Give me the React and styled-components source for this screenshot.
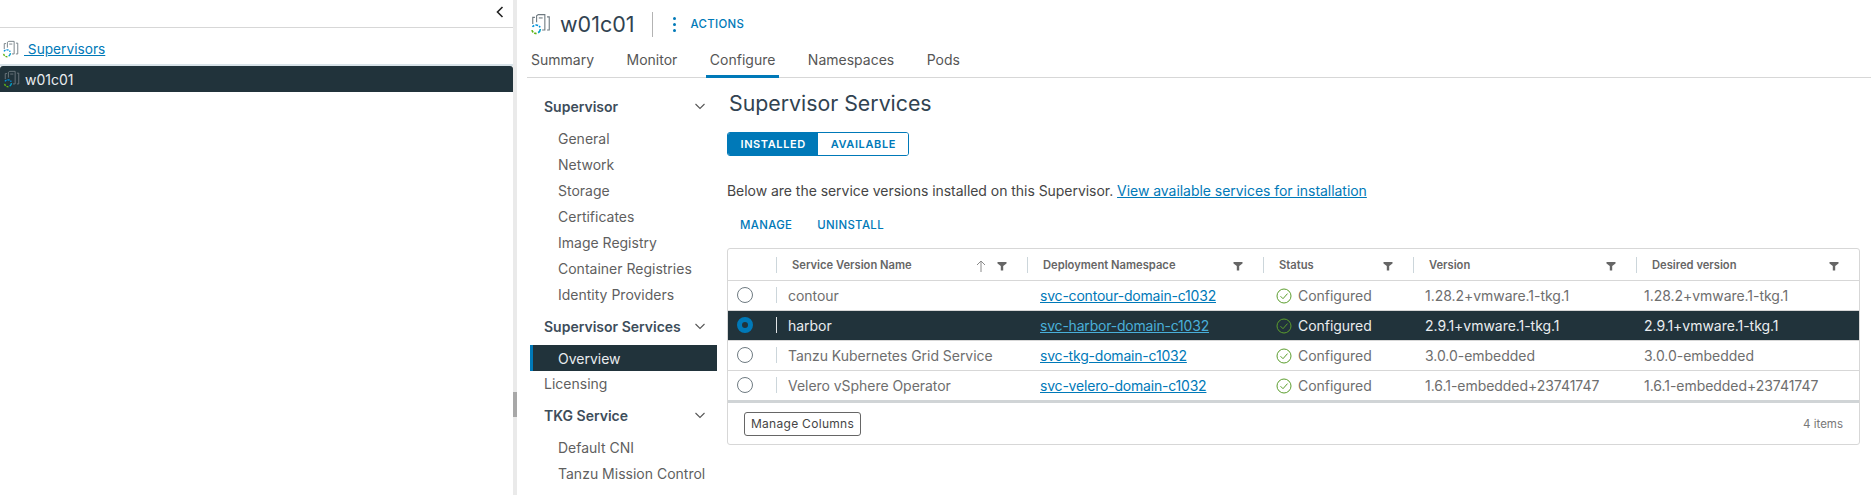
import React from "react";
import styled, { createGlobalStyle } from "styled-components";

const services = [
  { name: "contour", ns: "svc-contour-domain-c1032", version: "1.28.2+vmware.1-tkg.1" },
  { name: "harbor", ns: "svc-harbor-domain-c1032", version: "2.9.1+vmware.1-tkg.1", selected: true },
  { name: "Tanzu Kubernetes Grid Service", ns: "svc-tkg-domain-c1032", version: "3.0.0-embedded" },
  { name: "Velero vSphere Operator", ns: "svc-velero-domain-c1032", version: "1.6.1-embedded+23741747" },
];

const columns = "48px 251px 236px 150px 223px 1fr";

function ClusterIcon({ size = 19 }) {
  return (
    <svg width={size} height={size} viewBox="0 0 20 20" fill="none">
      <path d="M2.5 10V4H4.5" stroke="#6f7a81" />
      <path d="M6 8.5V2.5L7.5 1.5H13.5V15.5H11" stroke="#6f7a81" />
      <path d="M8 4.5H11.5" stroke="#6f7a81" />
      <path d="M15.5 3.5H17.5V15.5H15.5" stroke="#6f7a81" />
      <path d="M2.2 12.6A4.2 4.2 0 0 1 9.2 13" stroke="#0091da" strokeWidth="1.5" strokeDasharray="2.2 1" />
      <path d="M9.4 14.6A4.2 4.2 0 0 1 7.4 18" stroke="#00a1c9" strokeWidth="1.5" />
      <path d="M6 18.6A4.2 4.2 0 0 1 1.6 14.5" stroke="#60b515" strokeWidth="1.5" strokeDasharray="2.2 1" />
    </svg>
  );
}

function FilterIcon() {
  return (
    <svg width="10" height="10" viewBox="0 0 10 10">
      <path d="M0.5 1H9.5V2.4L6.2 5V9.5H3.8V5L0.5 2.4Z" fill="#666" />
    </svg>
  );
}

function Chevron() {
  return (
    <svg width="12" height="12" viewBox="0 0 12 12" fill="none">
      <path d="M1.5 4L6 8.5L10.5 4" stroke="#565656" strokeWidth="1.1" />
    </svg>
  );
}

function CheckCircle() {
  return (
    <svg width="16" height="16" viewBox="0 0 16 16" fill="none" stroke="#5c9e2e" strokeWidth="1">
      <circle cx="8" cy="8" r="7" />
      <path d="M4.5 8.2L7 10.7L11.5 5.6" />
    </svg>
  );
}

export default function App() {
  return (
    <Page>
      <GlobalStyle />
      <LeftPanel>
        <CollapseBar>
          <svg width="12" height="14" viewBox="0 0 12 14" fill="none">
            <path d="M8.5 2L3.5 7L8.5 12" stroke="#222" strokeWidth="1.6" />
          </svg>
        </CollapseBar>
        <Breadcrumb>
          <ClusterIcon size={18} />
          <BreadcrumbLink href="#">&nbsp;Supervisors</BreadcrumbLink>
        </Breadcrumb>
        <TreeRow>
          <ClusterIcon size={18} />
          w01c01
        </TreeRow>
      </LeftPanel>
      <Divider>
        <Grip />
      </Divider>
      <Main>
        <TitleBar>
          <ClusterIcon size={22} />
          <Title>w01c01</Title>
          <TitleSep />
          <Dots>
            <i />
            <i />
            <i />
          </Dots>
          <ActionsLabel>ACTIONS</ActionsLabel>
        </TitleBar>
        <Tabs>
          <Tab>Summary</Tab>
          <Tab>Monitor</Tab>
          <Tab $active>Configure</Tab>
          <Tab>Namespaces</Tab>
          <Tab>Pods</Tab>
        </Tabs>
        <Body>
          <SideNav>
            <NavHead>Supervisor<Chevron /></NavHead>
            <NavItem>General</NavItem>
            <NavItem>Network</NavItem>
            <NavItem>Storage</NavItem>
            <NavItem>Certificates</NavItem>
            <NavItem>Image Registry</NavItem>
            <NavItem>Container Registries</NavItem>
            <NavItem>Identity Providers</NavItem>
            <NavHead>Supervisor Services<Chevron /></NavHead>
            <NavItem $active>Overview</NavItem>
            <NavPlain>Licensing</NavPlain>
            <NavHead>TKG Service<Chevron /></NavHead>
            <NavItem>Default CNI</NavItem>
            <NavItem>Tanzu Mission Control</NavItem>
          </SideNav>
          <Content>
            <Heading>Supervisor Services</Heading>
            <Toggle>
              <ToggleBtn $on>INSTALLED</ToggleBtn>
              <ToggleBtn>AVAILABLE</ToggleBtn>
            </Toggle>
            <Intro>
              Below are the service versions installed on this Supervisor.{" "}
              <TextLink href="#">View available services for installation</TextLink>
            </Intro>
            <ActionRow>
              <ActionLink>MANAGE</ActionLink>
              <ActionLink>UNINSTALL</ActionLink>
            </ActionRow>
            <Table>
              <HeadRow>
                <HeadCell />
                <HeadCell $sep>
                  Service Version Name
                  <HeadIcons>
                    <svg width="12" height="14" viewBox="0 0 12 14" fill="none">
                      <path d="M6 13V2M2 6L6 2L10 6" stroke="#8a8a8a" />
                    </svg>
                    <FilterIcon />
                  </HeadIcons>
                </HeadCell>
                <HeadCell $sep>Deployment Namespace<HeadIcons><FilterIcon /></HeadIcons></HeadCell>
                <HeadCell $sep>Status<HeadIcons><FilterIcon /></HeadIcons></HeadCell>
                <HeadCell $sep>Version<HeadIcons><FilterIcon /></HeadIcons></HeadCell>
                <HeadCell $sep>Desired version<HeadIcons><FilterIcon /></HeadIcons></HeadCell>
              </HeadRow>
              {services.map((s) => (
                <Row key={s.name} $selected={s.selected}>
                  <RadioCell>
                    <Radio $on={s.selected} />
                  </RadioCell>
                  <NameCell $selected={s.selected}>{s.name}</NameCell>
                  <Cell><NsLink href="#" $selected={s.selected}>{s.ns}</NsLink></Cell>
                  <Cell><CheckCircle />Configured</Cell>
                  <Cell $pad="12px">{s.version}</Cell>
                  <Cell $pad="8px">{s.version}</Cell>
                </Row>
              ))}
              <Footer>
                <ColumnsBtn>Manage Columns</ColumnsBtn>
                <ItemCount>4 items</ItemCount>
              </Footer>
            </Table>
          </Content>
        </Body>
      </Main>
    </Page>
  );
}

const GlobalStyle = createGlobalStyle`
  html, body { margin: 0; padding: 0; background: #fff; }
  body { font-family: Inter, "Noto Sans", sans-serif; color: #565656; font-size: 14px; }
  * { box-sizing: border-box; }
`;

const Page = styled.div`
  display: flex;
  width: 1871px;
  height: 495px;
  overflow: hidden;
`;
const LeftPanel = styled.div`
  width: 513px;
  flex: none;
`;
const CollapseBar = styled.div`
  height: 28px;
  border-bottom: 1px solid #d7d7d7;
  display: flex;
  justify-content: flex-end;
  align-items: center;
  padding: 0 7px 3px 0;
`;
const Breadcrumb = styled.div`
  height: 38px;
  display: flex;
  align-items: center;
  padding: 6px 0 0 2px;
  border-bottom: 2px solid #d8e3e9;
`;
const BreadcrumbLink = styled.a`
  color: #0079b8;
  font-size: 13.7px;
  margin-left: 4px;
`;
const TreeRow = styled.div`
  height: 26px;
  background: #21333b;
  color: #e9ecef;
  font-size: 14px;
  display: flex;
  align-items: center;
  gap: 4px;
  padding-left: 3px;
  border-radius: 3px 3px 0 0;
`;
const Divider = styled.div`
  width: 4px;
  flex: none;
  background: #eaeaea;
  display: flex;
  align-items: flex-end;
  padding-bottom: 78px;
`;
const Grip = styled.div`
  width: 4px;
  height: 25px;
  background: #a8a8a8;
`;
const Main = styled.div`
  flex: 1;
  min-width: 0;
  padding-left: 10px;
`;
const TitleBar = styled.div`
  height: 48px;
  display: flex;
  align-items: center;
  padding-left: 3px;
`;
const Title = styled.h1`
  margin: 0 0 0 8px;
  font-size: 21.5px;
  font-weight: 400;
  color: #314351;
`;
const TitleSep = styled.div`
  width: 1px;
  height: 25px;
  background: #b3b3b3;
  margin: 0 20px 0 17px;
`;
const Dots = styled.span`
  display: flex;
  flex-direction: column;
  gap: 3px;
  margin-right: 15px;
  i {
    width: 3px;
    height: 3px;
    border-radius: 50%;
    background: #0079b8;
  }
`;
const ActionsLabel = styled.span`
  font-size: 11.4px;
  font-weight: 500;
  letter-spacing: 0.35px;
  color: #0079b8;
`;
const Tabs = styled.div`
  height: 30px;
  display: flex;
  gap: 24.5px;
  border-bottom: 1px solid #d7d7d7;
`;
const Tab = styled.div`
  height: 30px;
  padding: 3px 4px 0;
  font-size: 14px;
  color: #565656;
  border-bottom: ${(p) => (p.$active ? "3px solid #0079b8" : "none")};
`;
const Body = styled.div`
  display: flex;
`;
const SideNav = styled.div`
  width: 187px;
  flex: none;
  margin-left: 3px;
  padding-top: 15px;
`;
const NavHead = styled.div`
  height: 26px;
  padding: 0 11px 0 14px;
  margin-bottom: 6px;
  display: flex;
  align-items: center;
  justify-content: space-between;
  font-size: 14px;
  font-weight: 600;
  color: #3d4d5a;
  &:not(:first-child) { margin-top: 6px; }
`;
const NavItem = styled.div`
  height: 26px;
  line-height: 27px;
  padding-left: ${(p) => (p.$active ? "25px" : "28px")};
  font-size: 14px;
  color: ${(p) => (p.$active ? "#e9ecef" : "#5f5f5f")};
  background: ${(p) => (p.$active ? "#21333b" : "transparent")};
  border-left: ${(p) => (p.$active ? "3px solid #0079b8" : "none")};
  margin: ${(p) => (p.$active ? "1px 0 -1px" : "0")};
`;
const NavPlain = styled(NavItem)`
  padding-left: 14px;
`;
const Content = styled.div`
  flex: 1;
  min-width: 0;
  padding: 0 10px 0 10px;
`;
const Heading = styled.h2`
  margin: 11px 0 0 2px;
  font-size: 21.3px;
  line-height: 28px;
  font-weight: 400;
  color: #314351;
`;
const Toggle = styled.div`
  display: inline-flex;
  margin-top: 15px;
  height: 24px;
  border: 1px solid #0079b8;
  border-radius: 3px;
  overflow: hidden;
  vertical-align: top;
`;
const ToggleBtn = styled.div`
  display: flex;
  align-items: center;
  padding: 0 12.5px;
  font-size: 11px;
  font-weight: 600;
  letter-spacing: 0.6px;
  color: ${(p) => (p.$on ? "#fff" : "#0079b8")};
  background: ${(p) => (p.$on ? "#0079b8" : "#fff")};
`;
const Intro = styled.p`
  margin: 25px 0 0;
  line-height: 20px;
  font-size: 14px;
  letter-spacing: -0.04px;
  color: #454545;
`;
const TextLink = styled.a`
  color: #0079b8;
`;
const ActionRow = styled.div`
  display: flex;
  gap: 25px;
  padding-left: 13px;
  margin-top: 12px;
  height: 24px;
  align-items: center;
`;
const ActionLink = styled.span`
  font-size: 11.4px;
  font-weight: 500;
  letter-spacing: 0.35px;
  color: #0079b8;
`;
const Table = styled.div`
  margin-top: 11px;
  width: 1133px;
  border: 1px solid #d7d7d7;
  border-radius: 3px;
`;
const HeadRow = styled.div`
  display: grid;
  grid-template-columns: ${columns};
  height: 32px;
  border-bottom: 1px solid #d7d7d7;
`;
const HeadCell = styled.div`
  position: relative;
  display: flex;
  align-items: center;
  padding: 0 20px 0 16px;
  font-size: 11.2px;
  font-weight: 600;
  color: #666;
  &::before {
    content: "";
    display: ${(p) => (p.$sep ? "block" : "none")};
    position: absolute;
    left: 0;
    top: 8px;
    height: 16px;
    width: 1px;
    background: #ccd6db;
  }
`;
const HeadIcons = styled.span`
  margin-left: auto;
  display: flex;
  align-items: center;
  gap: 10px;
  padding-top: 2px;
`;
const Row = styled.div`
  display: grid;
  grid-template-columns: ${columns};
  height: 30px;
  border-bottom: 1px solid #d7d7d7;
  background: ${(p) => (p.$selected ? "#21333b" : "#fff")};
  color: ${(p) => (p.$selected ? "#eaedf0" : "#6e6e6e")};
  &:nth-child(5) { border-bottom: 3px solid #d0d4d6; height: 32px; }
`;
const Cell = styled.div`
  display: flex;
  align-items: center;
  gap: 6px;
  padding-left: ${(p) => p.$pad || "13px"};
  font-size: 14px;
  letter-spacing: -0.04px;
`;
const RadioCell = styled(Cell)`
  padding-left: 9px;
`;
const NameCell = styled(Cell)`
  position: relative;
  padding-left: 12px;
  &::before {
    content: "";
    position: absolute;
    left: 0;
    top: 6px;
    height: 16px;
    width: 1px;
    background: ${(p) => (p.$selected ? "#e0e4e6" : "#ccd6db")};
  }
`;
const Radio = styled.span`
  width: 16px;
  height: 16px;
  border-radius: 50%;
  border: ${(p) => (p.$on ? "5.5px solid #0079b8" : "1px solid #6f7b82")};
  background: ${(p) => (p.$on ? "#21333b" : "#fff")};
  margin-top: -2px;
`;
const NsLink = styled.a`
  color: ${(p) => (p.$selected ? "#49afd9" : "#0079b8")};
  text-decoration: underline;
  letter-spacing: -0.2px;
`;
const Footer = styled.div`
  height: 41px;
  display: flex;
  align-items: center;
  justify-content: space-between;
  padding: 0 16px;
`;
const ColumnsBtn = styled.button`
  width: 117px;
  height: 24px;
  padding: 0;
  background: #fff;
  border: 1px solid #666;
  border-radius: 3px;
  font-family: inherit;
  font-size: 12px;
  letter-spacing: 0.3px;
  color: #454545;
`;
const ItemCount = styled.span`
  font-size: 11.5px;
  color: #777;
`;
